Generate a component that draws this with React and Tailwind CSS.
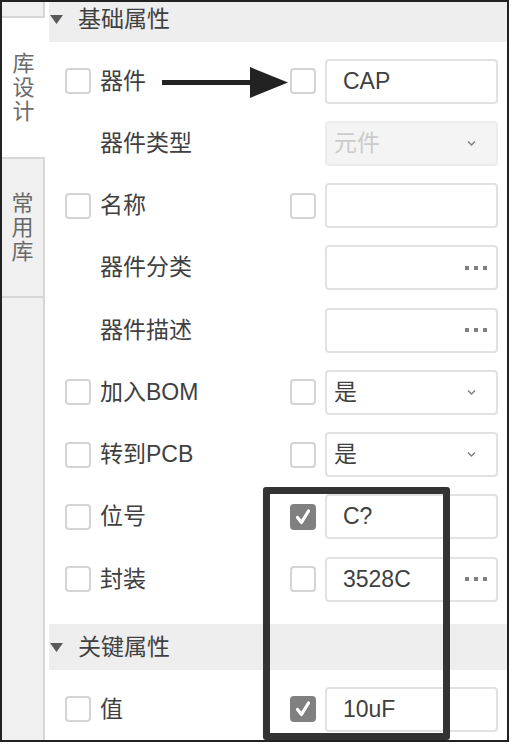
import React from "react";

const FONT = { fontFamily: '"Liberation Sans", "Noto Sans CJK SC", sans-serif' };

function Box({ checked }) {
  if (checked) {
    return (
      <div className="w-[26px] h-[26px] rounded-[4px] bg-[#808080] flex items-center justify-center flex-shrink-0">
        <svg width="18" height="18" viewBox="0 0 18 18">
          <path d="M3.5 9.5 L7.5 14.5 L14.5 3" fill="none" stroke="#fff" strokeWidth="3.2" strokeLinecap="round" strokeLinejoin="round" />
        </svg>
      </div>
    );
  }
  return <div className="w-[26px] h-[26px] rounded-[4px] border-2 border-[#d4d4d4] bg-white flex-shrink-0" />;
}

function Chevron() {
  return (
    <svg width="11" height="7" viewBox="0 0 11 7" className="ml-auto mr-[19px]">
      <path d="M2 1.5 L5.5 5 L9 1.5" fill="none" stroke="#808080" strokeWidth="1.5" />
    </svg>
  );
}

function Dots() {
  return (
    <div className="ml-auto mr-[9px] flex gap-[5px]">
      <span className="w-[4px] h-[4px] bg-[#808080]" />
      <span className="w-[4px] h-[4px] bg-[#808080]" />
      <span className="w-[4px] h-[4px] bg-[#808080]" />
    </div>
  );
}

function Field({ kind, value, disabled }) {
  const select = kind === "select";
  return (
    <div
      className={`w-[173px] h-[45px] rounded-[4px] border-2 flex items-center ${
        disabled ? "bg-[#f4f4f4] border-[#ececec]" : "bg-white border-[#e2e2e2]"
      } ${select ? "pl-[7px]" : "pl-[16px]"}`}
    >
      {value && (
        <span className={`text-[23px] leading-none ${disabled ? "text-[#cbcbcb]" : "text-[#404040]"}`}>{value}</span>
      )}
      {select && <Chevron />}
      {kind === "more" && <Dots />}
    </div>
  );
}

function Row({ label, c1, c2, field }) {
  return (
    <div className="h-[62.25px] flex items-center pl-[16px]">
      <div className="w-[26px] flex-shrink-0">{c1 !== undefined && <Box checked={c1} />}</div>
      <div className="ml-[9px] w-[190px] text-[23px] text-[#404040] leading-none">{label}</div>
      <div className="w-[26px] flex-shrink-0">{c2 !== undefined && <Box checked={c2} />}</div>
      <div className="ml-[9px]">
        <Field {...field} />
      </div>
    </div>
  );
}

function Header({ title, className = "" }) {
  return (
    <div className={`h-[46px] bg-[#eeeeee] flex items-center pl-[1px] ${className}`}>
      <svg width="13" height="9" viewBox="0 0 13 9">
        <path d="M0 0 H13 L6.5 9 Z" fill="#595959" />
      </svg>
      <span className="ml-[15px] text-[23px] text-[#404040] leading-none">{title}</span>
    </div>
  );
}

const rows = [
  { label: "器件", c1: false, c2: false, field: { kind: "text", value: "CAP" } },
  { label: "器件类型", field: { kind: "select", value: "元件", disabled: true } },
  { label: "名称", c1: false, c2: false, field: { kind: "text" } },
  { label: "器件分类", field: { kind: "more" } },
  { label: "器件描述", field: { kind: "more" } },
  { label: "加入BOM", c1: false, c2: false, field: { kind: "select", value: "是" } },
  { label: "转到PCB", c1: false, c2: false, field: { kind: "select", value: "是" } },
  { label: "位号", c1: false, c2: true, field: { kind: "text", value: "C?" } },
  { label: "封装", c1: false, c2: false, field: { kind: "more", value: "3528C" } },
];

export default function App() {
  return (
    <div className="relative w-[511px] h-[745px] bg-white overflow-hidden" style={FONT}>
      <div className="w-[509px] h-[742px] border-2 border-[#222] flex overflow-hidden">
        {/* ── Side tabs ── */}
        <div className="w-[43px] flex-shrink-0 flex flex-col bg-[#f0f0f0]">
          <div className="h-[16px] border-b-2 border-r-2 border-[#d6d6d6]" />
          <div className="h-[139px] bg-white flex flex-col items-center justify-center text-[22px] leading-[24px] text-[#6a6a6a]">
            <span>库</span>
            <span>设</span>
            <span>计</span>
          </div>
          <div className="h-[141px] border-t-2 border-b-2 border-r-2 border-[#d6d6d6] flex flex-col items-center justify-center text-[22px] leading-[24px] text-[#6a6a6a]">
            <span>常</span>
            <span>用</span>
            <span>库</span>
          </div>
          <div className="flex-1 border-r-2 border-[#d6d6d6]" />
        </div>

        {/* ── Properties ── */}
        <div className="ml-[4px] flex-1 flex flex-col">
          <Header title="基础属性" className="-mt-[6px] flex-shrink-0" />
          <div className="pt-2 pb-[14px]">
            {rows.map((r) => (
              <Row key={r.label} {...r} />
            ))}
          </div>
          <Header title="关键属性" className="flex-shrink-0" />
          <div className="pt-2">
            <Row label="值" c1={false} c2={true} field={{ kind: "text", value: "10uF" }} />
          </div>
        </div>
      </div>

      {/* arrow */}
      <svg className="absolute left-[160px] top-[64px]" width="132" height="36" viewBox="0 0 132 36">
        <rect x="2" y="16" width="92" height="5" fill="#222" />
        <path d="M90 3 L128 18.5 L90 34 Z" fill="#222" />
      </svg>

      {/* highlight frame */}
      <div className="absolute left-[263px] top-[487px] w-[187px] h-[253px] border-[7px] border-[#333] rounded-[3px]" />
    </div>
  );
}
